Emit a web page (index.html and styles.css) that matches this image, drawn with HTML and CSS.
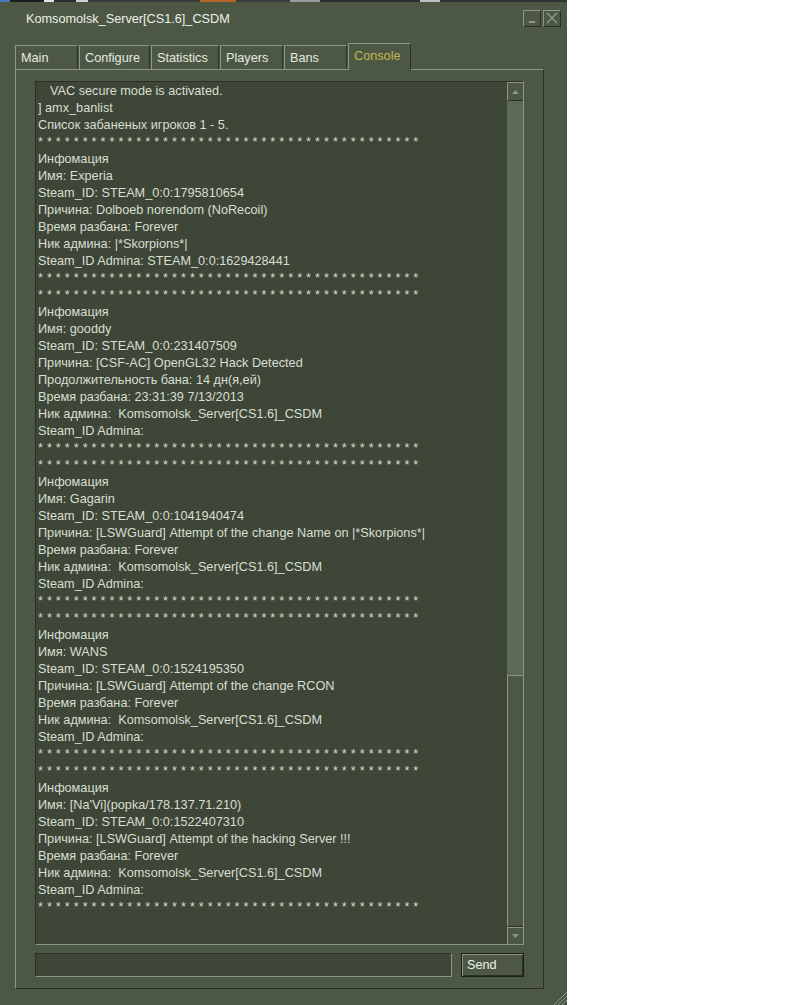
FILE: index.html
```html
<!DOCTYPE html>
<html lang="en">
<head>
  <meta charset="UTF-8">
  <title>Komsomolsk_Server[CS1.6]_CSDM</title>
  <link rel="stylesheet" href="styles.css">
</head>
<body>
  <div class="window">
    <div class="desktop-strip"></div>

    <div class="titlebar">
      <span class="title">Komsomolsk_Server[CS1.6]_CSDM</span>
      <div class="title-buttons">
        <button class="tbtn" title="Minimize">
          <svg width="16" height="15" viewBox="0 0 16 15"><rect x="5" y="10" width="6" height="2" fill="#8c9682"/></svg>
        </button>
        <button class="tbtn" title="Close">
          <svg width="16" height="15" viewBox="0 0 16 15"><path d="M3 2 L13 12 M13 2 L3 12" stroke="#8c9682" stroke-width="1.6"/></svg>
        </button>
      </div>
    </div>

    <div class="tabs">
      <div class="tab tab-main">Main</div>
      <div class="tab tab-configure">Configure</div>
      <div class="tab tab-statistics">Statistics</div>
      <div class="tab tab-players">Players</div>
      <div class="tab tab-bans">Bans</div>
      <div class="tab tab-console active">Console</div>
    </div>

    <div class="panel">
      <div class="console">
        <div class="log">
          <div class="line indent">VAC secure mode is activated.</div>
          <div class="line">] amx_banlist</div>
          <div class="line">Список забаненых игроков 1 - 5.</div>
          <div class="line stars">*******************************************</div>
          <div class="line">Инфомация</div>
          <div class="line">Имя: Experia</div>
          <div class="line">Steam_ID: STEAM_0:0:1795810654</div>
          <div class="line">Причина: Dolboeb norendom (NoRecoil)</div>
          <div class="line">Время разбана: Forever</div>
          <div class="line">Ник админа: |*Skorpions*|</div>
          <div class="line">Steam_ID Admina: STEAM_0:0:1629428441</div>
          <div class="line stars">*******************************************</div>
          <div class="line stars">*******************************************</div>
          <div class="line">Инфомация</div>
          <div class="line">Имя: gooddy</div>
          <div class="line">Steam_ID: STEAM_0:0:231407509</div>
          <div class="line">Причина: [CSF-AC] OpenGL32 Hack Detected</div>
          <div class="line">Продолжительность бана: 14 дн(я,ей)</div>
          <div class="line">Время разбана: 23:31:39 7/13/2013</div>
          <div class="line">Ник админа:  Komsomolsk_Server[CS1.6]_CSDM</div>
          <div class="line">Steam_ID Admina:</div>
          <div class="line stars">*******************************************</div>
          <div class="line stars">*******************************************</div>
          <div class="line">Инфомация</div>
          <div class="line">Имя: Gagarin</div>
          <div class="line">Steam_ID: STEAM_0:0:1041940474</div>
          <div class="line">Причина: [LSWGuard] Attempt of the change Name on |*Skorpions*|</div>
          <div class="line">Время разбана: Forever</div>
          <div class="line">Ник админа:  Komsomolsk_Server[CS1.6]_CSDM</div>
          <div class="line">Steam_ID Admina:</div>
          <div class="line stars">*******************************************</div>
          <div class="line stars">*******************************************</div>
          <div class="line">Инфомация</div>
          <div class="line">Имя: WANS</div>
          <div class="line">Steam_ID: STEAM_0:0:1524195350</div>
          <div class="line">Причина: [LSWGuard] Attempt of the change RCON</div>
          <div class="line">Время разбана: Forever</div>
          <div class="line">Ник админа:  Komsomolsk_Server[CS1.6]_CSDM</div>
          <div class="line">Steam_ID Admina:</div>
          <div class="line stars">*******************************************</div>
          <div class="line stars">*******************************************</div>
          <div class="line">Инфомация</div>
          <div class="line">Имя: [Na'Vi](popka/178.137.71.210)</div>
          <div class="line">Steam_ID: STEAM_0:0:1522407310</div>
          <div class="line">Причина: [LSWGuard] Attempt of the hacking Server !!!</div>
          <div class="line">Время разбана: Forever</div>
          <div class="line">Ник админа:  Komsomolsk_Server[CS1.6]_CSDM</div>
          <div class="line">Steam_ID Admina:</div>
          <div class="line stars">*******************************************</div>
        </div>
        <div class="scrollbar">
          <div class="sb-btn sb-up">
            <svg width="7" height="4" viewBox="0 0 7 4"><path d="M0 4 L3.5 0 L7 4 Z" fill="#8c9682"/></svg>
          </div>
          <div class="sb-track"></div>
          <div class="sb-thumb"></div>
          <div class="sb-btn sb-down">
            <svg width="7" height="4" viewBox="0 0 7 4"><path d="M0 0 L3.5 4 L7 0 Z" fill="#8c9682"/></svg>
          </div>
        </div>
      </div>

      <div class="command">
        <input type="text" class="command-input">
        <button class="send">Send</button>
      </div>
    </div>

    <div class="footer">
      <svg class="grip" width="14" height="14" viewBox="0 0 14 14">
        <path d="M14 1 L1 14 M14 5 L5 14 M14 9 L9 14" stroke="#8c9682" stroke-width="1"/>
      </svg>
    </div>
  </div>
</body>
</html>
```

FILE: styles.css
```css
body {
  margin: 0;
  padding: 0;
  background-color: #ffffff;
  font-family: 'Liberation Sans', Arial, sans-serif;
}
.window {
  width: 567px;
  height: 1005px;
  background-color: #4c5844;  /* steam olive */
  color: #dfe3da;
  font-size: 12.7px;
  overflow: hidden;
}
.desktop-strip {
  height: 2px;
  background: linear-gradient(90deg, #4a78b8 0 10px, #1e1e1e 10px 44px, #e4e4e4 44px 54px, #2c2c2c 54px 76px,
    #cfcfcf 76px 88px, #3a3a3a 88px 200px, #b8652c 200px 236px, #3c3c3c 236px 290px, #9a9a9a 290px 320px,
    #2e2e2e 320px 420px, #c0c0c0 420px 440px, #333 440px 567px);
}
.titlebar {
  height: 33px;
  display: flex;
  align-items: center;
  justify-content: space-between;
  padding: 0 6px 0 26px;
}
.title {
  color: #eef0ea;
  line-height: 17px;
  padding-top: 1px;
}
.title-buttons {
  display: flex;
  gap: 2px;
}
.tbtn {
  width: 18px;
  height: 17px;
  padding: 0;
  margin: 0;
  box-sizing: border-box;
  background-color: #4c5844;
  border-top: 1px solid #8c9682;
  border-left: 1px solid #8c9682;
  border-right: 1px solid #2a3023;
  border-bottom: 1px solid #2a3023;
  display: flex;
}
.tabs {
  margin-top: 8px;
  height: 26px;
  display: flex;
  align-items: flex-end;
  gap: 1px;
  padding-left: 15px;
}
.tab {
  height: 24px;
  box-sizing: border-box;
  border-top: 1px solid #8c9682;
  border-left: 1px solid #8c9682;
  border-right: 1px solid #2a3023;
  padding-left: 5px;
  line-height: 24px;
  color: #e6e9e1;
}
.tab-main { width: 63px; }
.tab-configure { width: 71px; }
.tab-statistics { width: 68px; }
.tab-players { width: 63px; }
.tab-bans { width: 63px; }
.tab-console { width: 63px; }
.tab.active {
  position: relative;
  height: 27px;
  margin-bottom: -1px;
  line-height: 24px;
  background-color: #4c5844;
  color: #c4b550;
}
.panel {
  margin-left: 15px;
  width: 529px;
  height: 920px;
  box-sizing: border-box;
  border-top: 1px solid #8c9682;
  border-left: 1px solid #8c9682;
  border-right: 1px solid #2a3023;
  border-bottom: 1px solid #2a3023;
  padding: 11px 19px 11px 19px;
  display: flex;
  flex-direction: column;
}
.console {
  height: 864px;
  box-sizing: border-box;
  display: flex;
  background-color: #3e4637;
  border-top: 1px solid #2a3023;
  border-left: 1px solid #2a3023;
  border-right: 1px solid #8c9682;
  border-bottom: 1px solid #8c9682;
}
.log {
  flex: 1;
  padding: 1px 0 0 2px;
  overflow: hidden;
  color: #d8ded3;
}
.line {
  height: 17px;
  line-height: 17px;
  white-space: pre;
}
.indent {
  padding-left: 12px;
}
.stars {
  letter-spacing: 4px;
}
.scrollbar {
  width: 16px;
  display: flex;
  flex-direction: column;
}
.sb-btn {
  box-sizing: border-box;
  display: flex;
  align-items: center;
  justify-content: center;
  border-top: 1px solid #8c9682;
  border-left: 1px solid #8c9682;
  background-color: #4c5844;
}
.sb-up {
  height: 19px;
  border-bottom: 1px solid #2a3023;
}
.sb-down {
  height: 17px;
}
.sb-track {
  height: 574px;
  background-color: #5b6a52;
}
.sb-thumb {
  height: 252px;
  box-sizing: border-box;
  background-color: #4c5844;
  border-top: 1px solid #8c9682;
  border-left: 1px solid #8c9682;
  border-bottom: 1px solid #2a3023;
}
.command {
  margin-top: 8px;
  height: 24px;
  display: flex;
  gap: 9px;
}
.command-input {
  width: 417px;
  height: 24px;
  box-sizing: border-box;
  margin: 0;
  padding: 0 4px;
  background-color: #3e4637;
  color: #d8ded3;
  border-top: 1px solid #2a3023;
  border-left: 1px solid #2a3023;
  border-right: 1px solid #8c9682;
  border-bottom: 1px solid #8c9682;
  font-family: 'Liberation Sans', Arial, sans-serif;
  font-size: 12.7px;
  outline: none;
}
.send {
  width: 63px;
  height: 24px;
  box-sizing: border-box;
  margin: 0;
  padding: 0 0 0 5px;
  text-align: left;
  background-color: #4c5844;
  color: #eef0ea;
  border: 1px solid #1b2017;
  box-shadow: inset 1px 1px 0 #8c9682, inset -1px -1px 0 #2a3023;
  font-family: 'Liberation Sans', Arial, sans-serif;
  font-size: 12.7px;
}
.footer {
  height: 16px;
  display: flex;
  justify-content: flex-end;
  align-items: flex-end;
}
.grip {
  display: block;
}
```
